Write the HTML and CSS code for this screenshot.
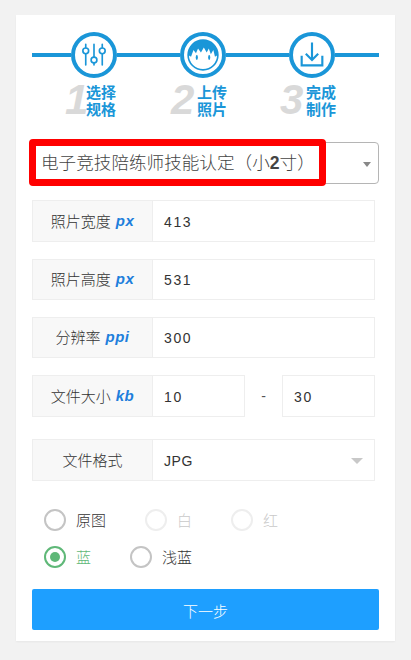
FILE: index.html
```html
<!DOCTYPE html>
<html lang="zh">
<head>
<meta charset="utf-8">
<title>照片制作</title>
<link rel="stylesheet" href="styles.css">
</head>
<body>
<main class="card">
  <div class="stepper">
    <span class="seg seg-a"></span>
    <span class="circle">
      <svg viewBox="0 0 46 46" class="icon">
        <g fill="none" stroke="#1a96d8" stroke-width="2" stroke-linecap="round">
          <path d="M13 10v4M13 21.500V35M23 10v15.500M23 32.500V35M33 10v4M33 21.500V35"/>
          <circle cx="13" cy="18" r="3.500"/><circle cx="23" cy="29" r="3.500"/><circle cx="33" cy="18" r="3.500"/>
        </g>
      </svg>
    </span>
    <span class="seg seg-b"></span>
    <span class="circle">
      <svg viewBox="0 0 46 46" class="icon">
        <circle cx="23" cy="23" r="18" fill="#fff" stroke="#1a96d8" stroke-width="2"/>
        <path fill="#1a96d8" d="M5 23C5 12 13 5 23 5S41 12 41 23L37.500 25 35.500 17 32.500 22 30 15 27.500 20 24 14 20.500 20 17 15 14.500 21 11.500 17 8.500 25Z"/>
        <ellipse cx="15.500" cy="26" rx="1.300" ry="3" fill="#1a96d8"/>
        <ellipse cx="30.500" cy="26" rx="1.300" ry="3" fill="#1a96d8"/>
      </svg>
    </span>
    <span class="seg seg-c"></span>
    <span class="circle">
      <svg viewBox="0 0 46 46" class="icon">
        <g fill="none" stroke="#1a96d8" stroke-width="2.600">
          <path d="M23 8v21M15.500 21.500 23 29l7.500-7.500"/>
          <path d="M10.500 24v11.500h25V24"/>
        </g>
      </svg>
    </span>
    <span class="seg seg-d"></span>
  </div>
  <div class="captions">
    <div class="caption cap-1"><i class="num">1</i><b>选择<br>规格</b></div>
    <div class="caption cap-2"><i class="num">2</i><b>上传<br>照片</b></div>
    <div class="caption cap-3"><i class="num">3</i><b>完成<br>制作</b></div>
  </div>

  <div class="picker">
    <span class="picker-text">电子竞技陪练师技能认定（小<span class="bold">2</span>寸）</span>
    <span class="picker-arrow"></span>
    <span class="highlight"></span>
  </div>

  <div class="row row-first">
    <div class="label">照片宽度 <em>px</em></div>
    <div class="value">413</div>
  </div>
  <div class="row row-short">
    <div class="label">照片高度 <em>px</em></div>
    <div class="value">531</div>
  </div>
  <div class="row row-short">
    <div class="label">分辨率 <em>ppi</em></div>
    <div class="value">300</div>
  </div>
  <div class="row-size">
    <div class="row row-inner">
      <div class="label">文件大小 <em>kb</em></div>
      <div class="value">10</div>
    </div>
    <span class="dash">-</span>
    <div class="box">30</div>
  </div>
  <div class="row row-format">
    <div class="label">文件格式</div>
    <div class="value value-select">JPG<span class="select-arrow"></span></div>
  </div>

  <div class="radios">
    <div class="radio-line">
      <span class="radio"><span class="dot"></span>原图</span>
      <span class="radio off"><span class="dot"></span>白</span>
      <span class="radio off"><span class="dot"></span>红</span>
    </div>
    <div class="radio-line">
      <span class="radio on"><span class="dot"></span>蓝</span>
      <span class="radio"><span class="dot"></span>浅蓝</span>
    </div>
  </div>

  <button class="next" type="button">下一步</button>
</main>
</body>
</html>
```
FILE: styles.css
```css
* { box-sizing: border-box; }
html, body { margin: 0; height: 660px; overflow: hidden; }
body {
  background: #f2f2f2;
  font-family: "Liberation Sans", "Noto Sans CJK SC", sans-serif;
  font-size: 14px;
  color: #333;
  padding: 15px 16px 0;
}
.card {
  background: #fff;
  width: 379px;
  height: 626px;
  padding: 17px 16px 0;
  box-shadow: 0 1px 2px rgba(0,0,0,.05);
}
.stepper { display: flex; align-items: center; height: 46px; }
.seg { height: 4px; background: #1a96d8; }
.seg-a { width: 39px; }
.seg-b { width: 63px; }
.seg-c { width: 63px; }
.seg-d { flex: 1; }
.circle {
  width: 46px; height: 46px; flex: none;
  border: 4px solid #1a96d8; border-radius: 50%;
  background: #fff;
  display: flex; align-items: center; justify-content: center;
}
.icon { width: 38px; height: 38px; display: block; }
.captions { display: flex; height: 35px; margin-top: 4px; }
.caption { display: flex; align-items: center; color: #1a96d8; height: 35px; }
.cap-1 { margin-left: 33px; width: 106px; }
.cap-2 { width: 109px; }
.cap-3 { width: 60px; }
.num {
  font: italic bold 42px/33px "Liberation Sans", sans-serif;
  color: #d9d9d9;
  width: 20px;
  text-align: center;
  display: block;
}
.cap-2 .num, .cap-3 .num { width: 23px; margin-right: 3px; }
.cap-1 .num { width: 19px; margin-right: 2px; }
.caption b { font: bold 15px/17px "Noto Sans CJK SC", sans-serif; white-space: nowrap; }

.picker {
  position: relative;
  margin-top: 25px;
  height: 42px;
  border: 1px solid #b5b5b5;
  border-radius: 4px;
  display: flex; align-items: center;
  padding-left: 8px;
}
.picker-text { font: 300 17.600px/1 "Noto Sans CJK SC", sans-serif; color: #444; white-space: nowrap; }
.bold { font-family: "Liberation Sans", sans-serif; font-weight: bold; }
.picker-arrow {
  position: absolute; right: 7px; top: 19px;
  border-left: 4.500px solid transparent; border-right: 4.500px solid transparent;
  border-top: 5px solid #888;
}
.highlight {
  position: absolute; left: -4px; top: -4px;
  width: 297px; height: 47px;
  border: 7px solid #f00; border-radius: 4px;
}
.row {
  display: flex; width: 343px; height: 42px;
  border: 1px solid #eeeeee;
  margin-top: 16px;
}
.row-short { height: 41px; margin-top: 17px; }
.label {
  width: 120px; flex: none;
  background: #f8f8f8;
  border-right: 1px solid #eeeeee;
  display: flex; align-items: center; justify-content: center; gap: 5px;
  padding-bottom: 2px;
  font: 300 15px/1 "Noto Sans CJK SC", sans-serif;
  color: #333;
  white-space: nowrap;
}
.label em {
  font: italic bold 15px/1 "Liberation Sans", sans-serif;
  color: #1e7fdc;
  letter-spacing: .5px;
}
.value {
  flex: 1;
  display: flex; align-items: center;
  padding: 1px 0 0 11px;
  font-size: 14px; letter-spacing: 1.600px;
  color: #333;
  font-family: "Liberation Sans", sans-serif;
}
.row-size { display: flex; align-items: center; width: 343px; margin-top: 17px; }
.row-inner { width: 213px; margin-top: 0; }
.dash { width: 37px; text-align: center; color: #555; }
.box {
  flex: 1; height: 42px;
  border: 1px solid #eeeeee;
  display: flex; align-items: center;
  padding: 1px 0 0 11px;
  letter-spacing: 1.600px;
}
.row-format { margin-top: 22px; }
.value-select { position: relative; letter-spacing: .6px; }
.select-arrow {
  position: absolute; right: 11px; top: 18px;
  border-left: 6px solid transparent; border-right: 6px solid transparent;
  border-top: 6px solid #c8c8c8;
}
.radios { margin-top: 20px; padding-left: 12px; }
.radio-line { display: flex; align-items: center; height: 37px; }
.radio {
  display: inline-flex; align-items: center; gap: 10px;
  font: 300 15px/1 "Noto Sans CJK SC", sans-serif;
  color: #333;
  margin-right: 39px;
}
.dot {
  width: 22px; height: 22px;
  border: 2px solid #c4c4c4; border-radius: 50%;
  background: #fff;
  display: block; position: relative;
  margin-top: 1px;
}
.off { color: #c9c9c9; }
.off .dot { border-color: #eeeeee; }
.on { color: #5fb878; }
.on .dot { border-color: #5fb878; }
.on .dot::after {
  content: ""; position: absolute; left: 4px; top: 4px;
  width: 10px; height: 10px; border-radius: 50%; background: #5fb878;
}
.next {
  display: block; width: 347px; height: 41px;
  margin-top: 14px;
  border: 0; border-radius: 2px;
  background: #1e9fff; color: #fff;
  font: 300 15px/41px "Noto Sans CJK SC", sans-serif;
}
```
